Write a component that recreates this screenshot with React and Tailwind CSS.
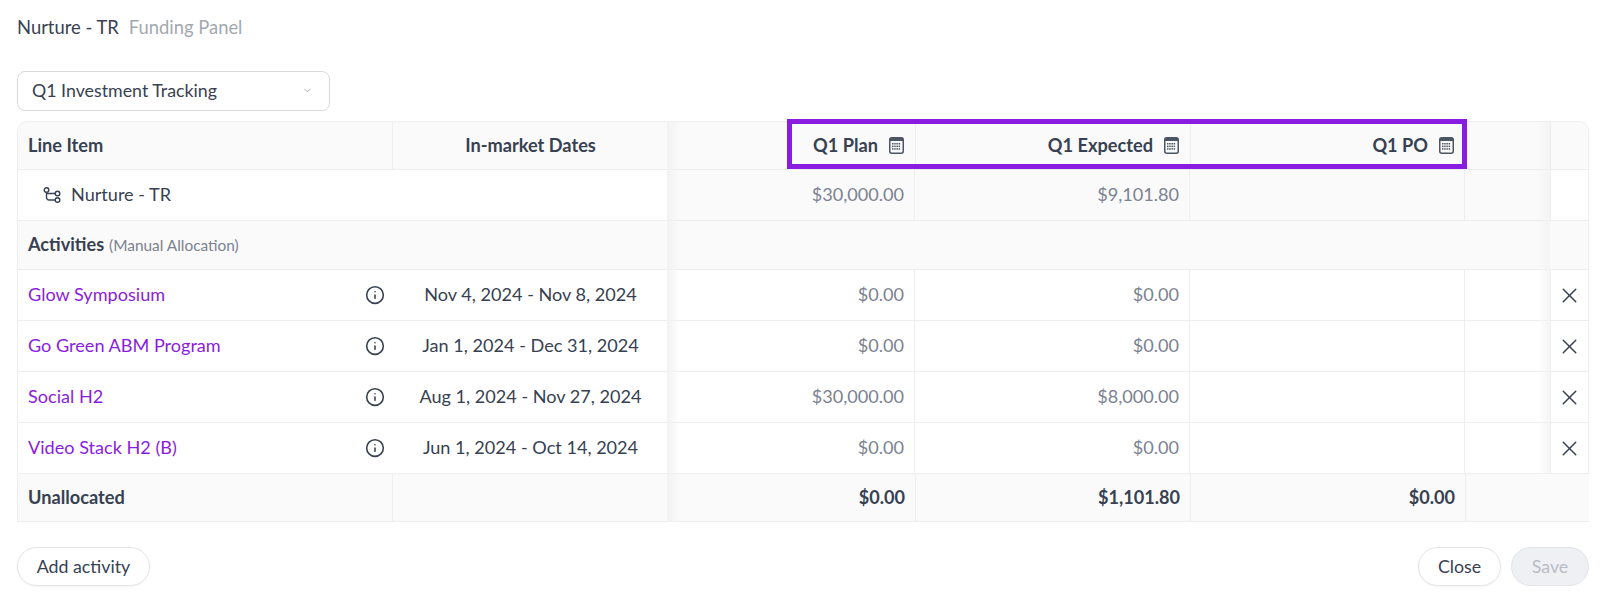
import React from 'react';
import { Info, X, ChevronDown } from 'lucide-react';

const headGrid = 'grid grid-cols-[375px_275px_248px_275px_275px_84px_38px]';
const bodyGrid = 'grid grid-cols-[375px_275px_247px_275px_275px_85px_38px]';
const footGrid = 'grid grid-cols-[375px_275px_248px_275px_275px_123px]';

const activities = [
    { nombre: 'Glow Symposium', fechas: 'Nov 4, 2024 - Nov 8, 2024', plan: '$0.00', expected: '$0.00' },
    { nombre: 'Go Green ABM Program', fechas: 'Jan 1, 2024 - Dec 31, 2024', plan: '$0.00', expected: '$0.00' },
    { nombre: 'Social H2', fechas: 'Aug 1, 2024 - Nov 27, 2024', plan: '$30,000.00', expected: '$8,000.00' },
    { nombre: 'Video Stack H2 (B)', fechas: 'Jun 1, 2024 - Oct 14, 2024', plan: '$0.00', expected: '$0.00' },
];

const CalcIcon = () => (
    <svg width="15" height="17" viewBox="0 0 15 17" className="shrink-0 ml-[11px]">
        <rect x="0.75" y="0.75" width="13.5" height="15.5" rx="2" fill="none" stroke="#4b5563" strokeWidth="1.5" />
        <rect x="1" y="1" width="13" height="3" fill="#4b5563" />
        {[6, 8.6, 11.2].map((y) =>
            [3, 5.2, 7.4, 9.6].map((x) => (
                <rect key={`${x}-${y}`} x={x} y={y} width="1.5" height="1.5" fill="#4b5563" />
            ))
        )}
    </svg>
);

const TreeIcon = () => (
    <svg width="18" height="16" viewBox="0 0 18 16" fill="none" stroke="#374151" strokeWidth="1.4" className="shrink-0">
        <circle cx="3.5" cy="3" r="2.3" />
        <circle cx="14.5" cy="6.5" r="2.3" />
        <circle cx="14.5" cy="13" r="2.3" />
        <path d="M3.5 5.3V10.5a2.5 2.5 0 0 0 2.5 2.5h6.2M4 6.5h8.2" />
    </svg>
);

const HeadCell = ({ children }) => (
    <div className="flex items-center justify-end pr-[11px] border-r border-[#eeeeee] font-bold text-[18.2px] text-[#374151]">
        {children}
        <CalcIcon />
    </div>
);

const ValueCell = ({ children, className = '' }) => (
    <div className={`flex items-center justify-end pr-[10px] border-r border-[#eeeeee] text-[#7b8290] ${className}`}>
        {children}
    </div>
);

const App = () => {
    return (
        <div className="w-[1607px] h-[614px] bg-white px-[17px] pt-[18px] text-[18.1px] text-[#374151] font-['Lato',sans-serif] overflow-hidden">
            <div className="flex items-center gap-[10px] h-[20px] text-[18.4px]">
                <span>Nurture - TR</span>
                <span className="text-[#a3a8b0]">Funding Panel</span>
            </div>

            <button className="mt-[33px] flex items-center justify-between w-[313px] h-[40px] pl-[14px] pr-[16px] pb-[1px] border border-[#d9dadd] rounded-[8px] text-[17.8px]">
                Q1 Investment Tracking
                <ChevronDown size={11} color="#a3a8b0" />
            </button>

            <div className="relative mt-[10px] w-[1572px] rounded-t-[10px] border-t border-[#eeeeee]">
                <div className={`${headGrid} h-[48px] bg-[#fafafa] border-b border-[#eeeeee] rounded-t-[10px] border-x border-x-[#eeeeee]`}>
                    <div className="flex items-center pl-[10px] border-r border-[#eeeeee] font-bold text-[18.2px]">Line Item</div>
                    <div className="flex items-center justify-center font-bold text-[18.2px]">In-market Dates</div>
                    <HeadCell>Q1 Plan</HeadCell>
                    <HeadCell>Q1 Expected</HeadCell>
                    <HeadCell>Q1 PO</HeadCell>
                    <div />
                    <div className="border-l border-[#eeeeee]" />
                </div>

                <div className={`${bodyGrid} h-[51px] border-b border-[#eeeeee] border-x border-x-[#eeeeee]`}>
                    <div className="col-span-2 flex items-center gap-[10px] pl-[25px] pb-[1px] bg-white">
                        <TreeIcon />
                        Nurture - TR
                    </div>
                    <ValueCell className="bg-[#fafafa] pb-[1px]">$30,000.00</ValueCell>
                    <ValueCell className="bg-[#fafafa] pb-[1px]">$9,101.80</ValueCell>
                    <ValueCell className="bg-[#fafafa]" />
                    <div className="bg-[#fafafa]" />
                    <div className="bg-white border-l border-[#eeeeee]" />
                </div>

                <div className="flex items-center h-[49px] pl-[10px] bg-[#fafafa] border-b border-[#eeeeee] border-x border-x-[#eeeeee]">
                    <span className="font-bold">Activities</span>
                    <span className="ml-[5px] pt-[1px] text-[15.4px] text-[#7b8290]">(Manual Allocation)</span>
                </div>

                {activities.map((a) => (
                    <div key={a.nombre} className={`${bodyGrid} h-[51px] border-b border-[#eeeeee] border-x border-x-[#eeeeee]`}>
                        <div className="flex items-center justify-between pl-[10px] pr-[8px] text-[#8a1ce0]">
                            {a.nombre}
                            <Info size={20} color="#374151" strokeWidth={1.9} className="-mt-[1px]" />
                        </div>
                        <div className="flex items-center justify-center">{a.fechas}</div>
                        <ValueCell>{a.plan}</ValueCell>
                        <ValueCell>{a.expected}</ValueCell>
                        <ValueCell />
                        <div />
                        <div className="flex items-center justify-center border-l border-[#eeeeee]">
                            <X size={25} color="#374151" strokeWidth={1.4} />
                        </div>
                    </div>
                ))}

                <div className={`${footGrid} h-[48px] bg-[#fafafa] border-b border-[#eeeeee] border-l border-l-[#eeeeee] font-bold`}>
                    <div className="flex items-center pl-[10px] border-r border-[#eeeeee] text-[18.2px]">Unallocated</div>
                    <div />
                    <ValueCell className="!text-[#374151]">$0.00</ValueCell>
                    <ValueCell className="!text-[#374151]">$1,101.80</ValueCell>
                    <ValueCell className="!text-[#374151]">$0.00</ValueCell>
                    <div />
                </div>

                <div className="absolute top-0 bottom-0 left-[650px] w-[12px] pointer-events-none bg-gradient-to-r from-[#f2f2f2] to-transparent" />
                <div className="absolute top-0 bottom-[48px] left-[1521px] w-[12px] pointer-events-none bg-gradient-to-l from-[#f4f4f4] to-transparent" />
                <div className="absolute -top-[3px] left-[770px] w-[680px] h-[50px] border-[5px] border-[#8a1ce0] pointer-events-none" />
            </div>

            <div className="mt-[25px] w-[1572px] flex items-center justify-between text-[17.8px]">
                <button className="h-[39px] w-[133px] rounded-full border border-[#e3e4e8] shadow-xs">Add activity</button>
                <div className="flex items-center gap-[10px]">
                    <button className="h-[39px] w-[83px] rounded-full border border-[#e3e4e8] shadow-xs">Close</button>
                    <button className="h-[39px] w-[78px] rounded-full border border-[#e3e4e8] bg-[#eff0f4] text-[#b9bcc4]">Save</button>
                </div>
            </div>
        </div>
    );
};

export default App;
